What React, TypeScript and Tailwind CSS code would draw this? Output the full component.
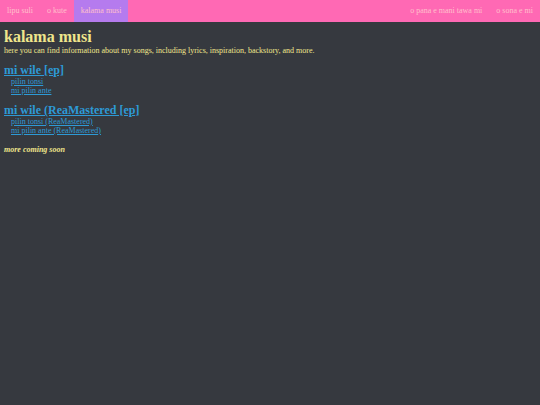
export default function App() {
  const font = { fontFamily: '"Liberation Serif", "DejaVu Serif", serif' }
  return (
    <div className="min-h-[405px] w-full bg-[#36393f]" style={font}>
      {/* nav */}
      <nav className="flex h-[22px] items-stretch justify-between bg-[#ff69b4] text-[8px] text-[#ffc0cb]">
        <div className="flex">
          <a className="flex items-center px-[7px]">lipu suli</a>
          <a className="flex items-center px-[7px]">o kute</a>
          <a className="flex items-center bg-[#b57bee] px-[7px]">kalama musi</a>
        </div>
        <div className="flex">
          <a className="flex items-center px-[7px]">o pana e mani tawa mi</a>
          <a className="flex items-center px-[7px]">o sona e mi</a>
        </div>
      </nav>

      <main className="px-[4px] pt-[6px] text-[#f0e68c]">
        <h1 className="text-[16px] font-bold leading-[18px]">kalama musi</h1>
        <p className="text-[8px] leading-[10px]">
          here you can find information about my songs, including lyrics, inspiration, backstory, and more.
        </p>

        <section className="mt-[7px]">
          <h2 className="text-[12px] font-bold leading-[14px] text-[#2d9ad6] underline">mi wile [ep]</h2>
          <ul className="pl-[7px] text-[8px] leading-[9px] text-[#2d9ad6]">
            <li><a className="underline">pilin tonsi</a></li>
            <li><a className="underline">mi pilin ante</a></li>
          </ul>
        </section>

        <section className="mt-[8px]">
          <h2 className="text-[12px] font-bold leading-[14px] text-[#2d9ad6] underline">mi wile (ReaMastered [ep]</h2>
          <ul className="pl-[7px] text-[8px] leading-[9px] text-[#2d9ad6]">
            <li><a className="underline">pilin tonsi (ReaMastered)</a></li>
            <li><a className="underline">mi pilin ante (ReaMastered)</a></li>
          </ul>
        </section>

        <p className="mt-[10px] text-[8px] font-bold italic leading-[10px]">more coming soon</p>
      </main>
    </div>
  )
}
